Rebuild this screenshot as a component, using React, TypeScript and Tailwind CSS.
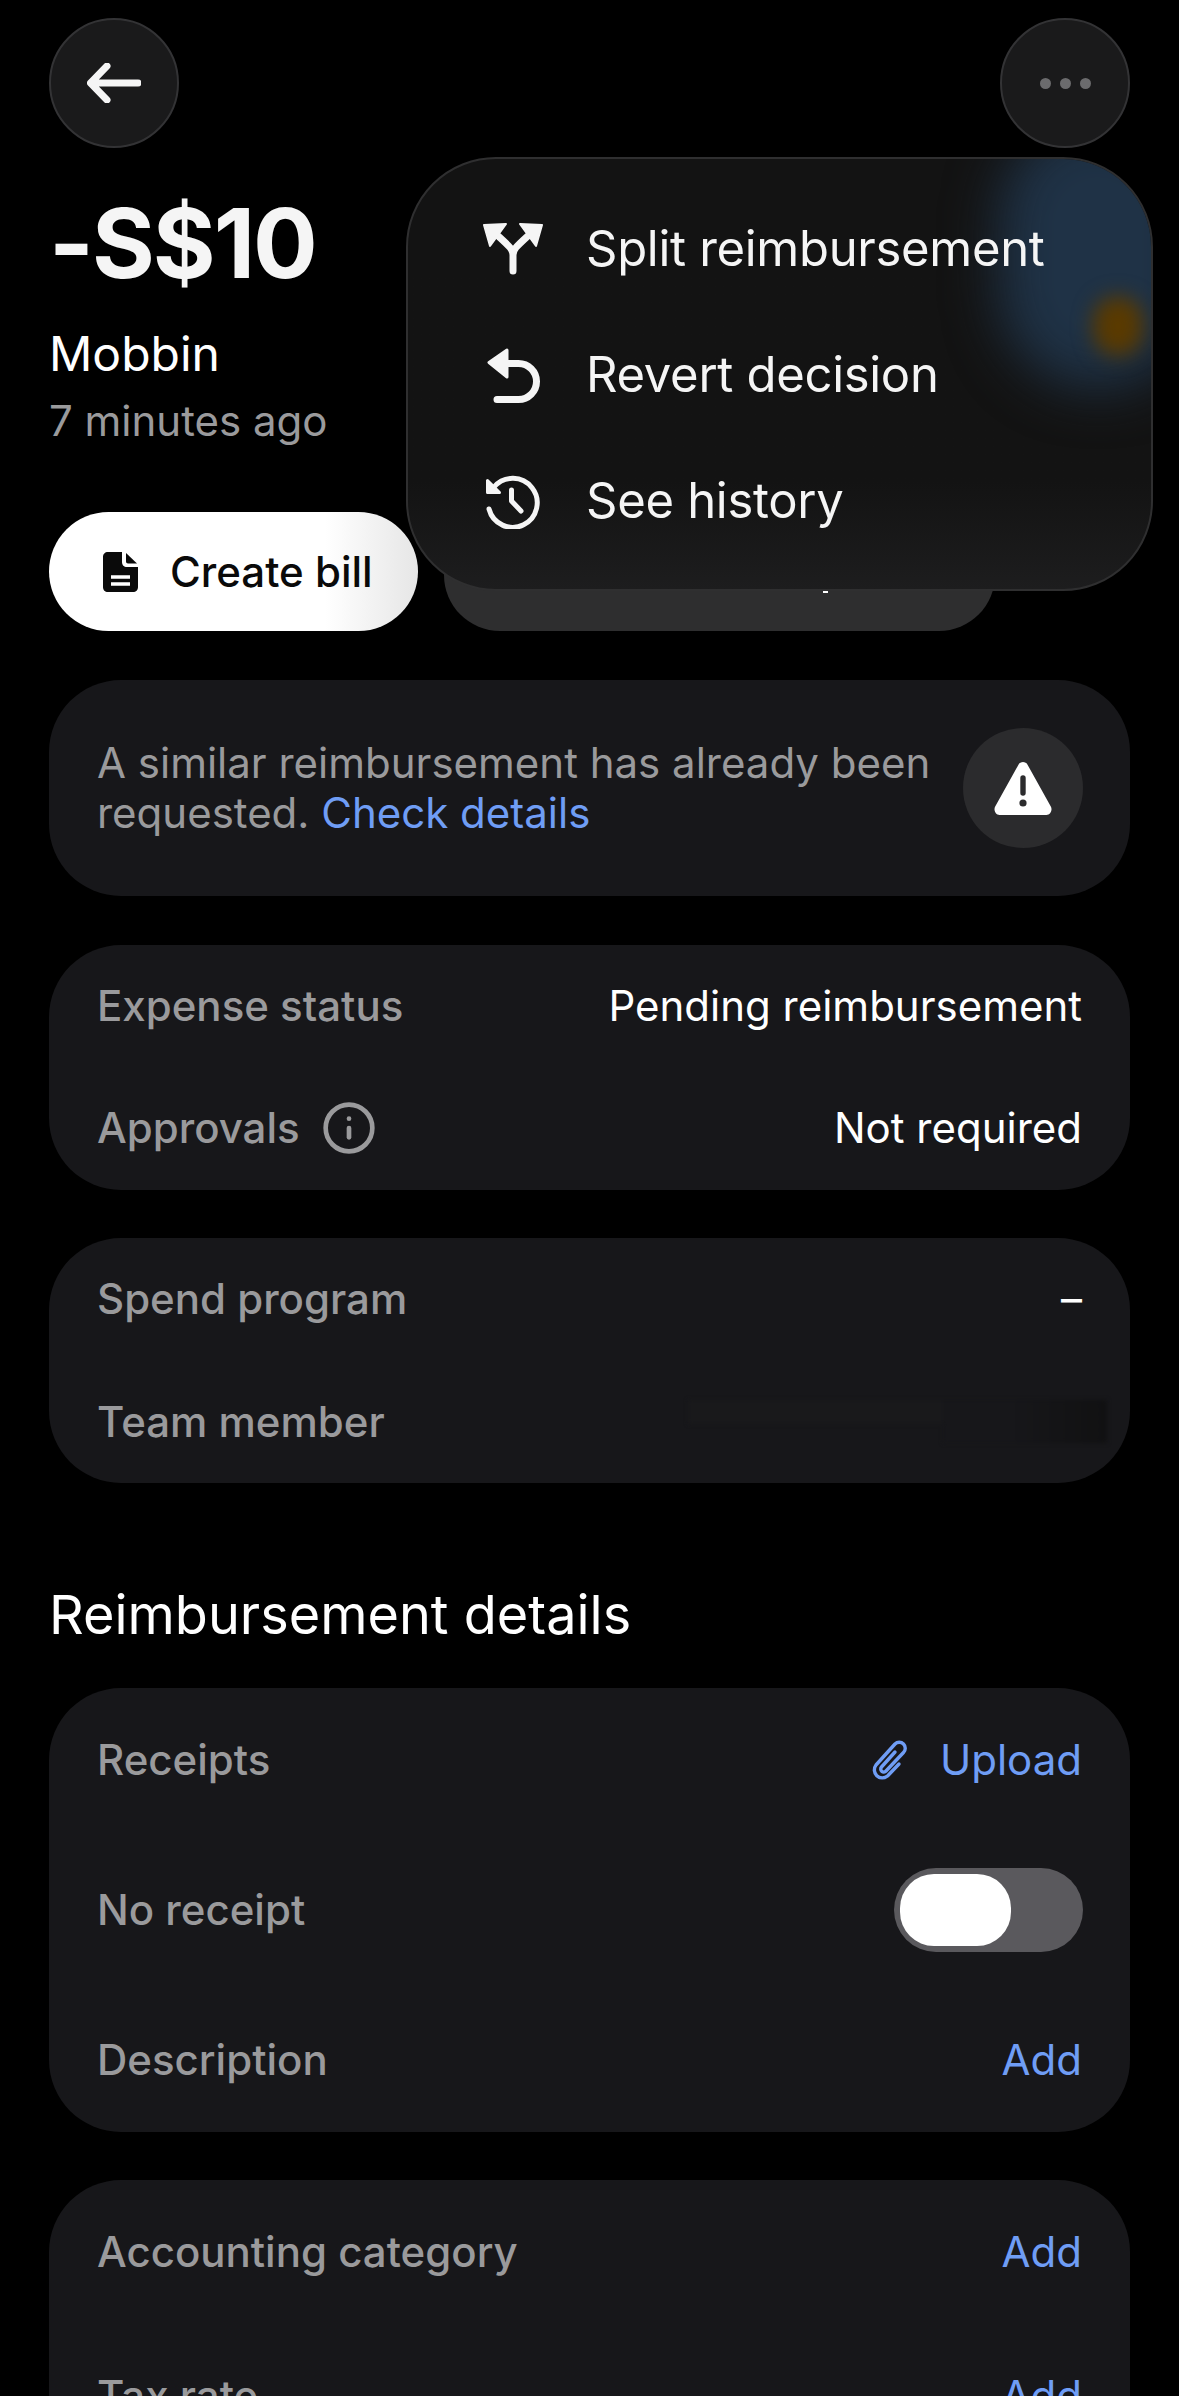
import { Info } from "lucide-react";
import type { ReactNode } from "react";

const font = { fontFamily: "Inter, 'Liberation Sans', sans-serif" };

function SplitIcon() {
  return (
    <svg width="60" height="52" viewBox="0 0 60 52" fill="none">
      <path d="M30 48V32C30 26 26 23 13 11M30 32C30 26 34 23 47 11" stroke="#f5f5f5" strokeWidth="7" strokeLinecap="round" />
      <path d="M1 2L23 1L7 23Z" fill="#f5f5f5" stroke="#f5f5f5" strokeWidth="2" strokeLinejoin="round" />
      <path d="M59 2L37 1L53 23Z" fill="#f5f5f5" stroke="#f5f5f5" strokeWidth="2" strokeLinejoin="round" />
    </svg>
  );
}

function RevertIcon() {
  return (
    <svg width="53" height="55" viewBox="0 0 53 55" fill="none">
      <path d="M18 15.5H31.5a18 18 0 0 1 0 36H10" stroke="#f5f5f5" strokeWidth="7" strokeLinecap="round" />
      <path d="M2 14.5L20 2V29Z" fill="#f5f5f5" stroke="#f5f5f5" strokeWidth="3" strokeLinejoin="round" />
    </svg>
  );
}

function HistoryIcon() {
  return (
    <svg width="54" height="55" viewBox="0 0 54 55" fill="none">
      <path d="M8 13A24.5 24.5 0 1 1 3 35" stroke="#f5f5f5" strokeWidth="5" strokeLinecap="round" />
      <path d="M1.5 6.5V18.5H13.5Z" fill="#f5f5f5" stroke="#f5f5f5" strokeWidth="3" strokeLinejoin="round" />
      <path d="M25.5 16V27L35 37" stroke="#f5f5f5" strokeWidth="5" strokeLinecap="round" strokeLinejoin="round" />
    </svg>
  );
}

function BackArrow() {
  return (
    <svg width="54" height="40" viewBox="0 0 54 40" fill="none">
      <path d="M51 20H4M20 3L3.5 20L20 37" stroke="#f5f5f5" strokeWidth="7" strokeLinecap="round" strokeLinejoin="round" />
    </svg>
  );
}

function BillIcon() {
  return (
    <svg width="35" height="40" viewBox="0 0 35 40">
      <path d="M5 0H19V10C19 13 21 15 24 15H35V35C35 38 33 40 30 40H5C2 40 0 38 0 35V5C0 2 2 0 5 0Z" fill="#0a0a0a" />
      <path d="M23 1L34 11.5H25C23.8 11.5 23 10.7 23 9.5Z" fill="#0a0a0a" />
      <path d="M8 25H27M8 32H27" stroke="#fff" strokeWidth="3.6" />
    </svg>
  );
}

function WarningIcon() {
  return (
    <svg width="58" height="54" viewBox="0 0 58 54">
      <path d="M24.6 3.5C26.6 0 31.4 0 33.4 3.5L56.8 45.5C58.8 49 56.4 54 52.4 54H5.6C1.6 54 -0.8 49 1.2 45.5Z" fill="#fff" />
      <path d="M29 17V32" stroke="#2b2b2d" strokeWidth="5.4" strokeLinecap="round" />
      <circle cx="29" cy="42" r="3.6" fill="#2b2b2d" />
    </svg>
  );
}

function ClipIcon() {
  return (
    <svg width="37" height="40" viewBox="0 0 37 40" fill="none">
      <path
        d="M23 12L9.5 27a3 3 0 0 0 4.5 4L31.5 12.5a6 6 0 0 0-8.5-8.5L4 25a8 8 0 0 0 11.5 11L27 24"
        stroke="#6f9df5"
        strokeWidth="3.4"
        strokeLinecap="round"
        strokeLinejoin="round"
      />
    </svg>
  );
}

function Row({ label, children, tall }: { label: ReactNode; children?: ReactNode; tall?: boolean }) {
  return (
    <div className={`flex items-center justify-between ${tall ? "h-[144px]" : "h-[122.5px]"}`}>
      <div className="flex items-center gap-[21px] font-medium text-[#9a9a9c]">{label}</div>
      {children}
    </div>
  );
}

const Card = ({ children, className = "" }: { children: ReactNode; className?: string }) => (
  <div className={`rounded-[72px] bg-[#17171a] px-[48px] ${className}`}>{children}</div>
);

const LinkText = ({ children }: { children: ReactNode }) => <span className="text-[#6f9df5]">{children}</span>;

export default function App() {
  return (
    <div style={font} className="relative h-[2396px] w-[1179px] overflow-hidden bg-black text-[42px] leading-[50px] text-white">
      <div className="flex justify-between px-[49px] pt-[18px]">
        <button className="flex h-[130px] w-[130px] items-center justify-center rounded-full border-2 border-[#333335] bg-[#1a1a1b]">
          <BackArrow />
        </button>
        <button className="flex h-[130px] w-[130px] items-center justify-center gap-[9px] rounded-full border-2 border-[#333335] bg-[#1a1a1b]">
          <span className="h-[11px] w-[11px] rounded-full bg-[#6b6b6d]" />
          <span className="h-[11px] w-[11px] rounded-full bg-[#6b6b6d]" />
          <span className="h-[11px] w-[11px] rounded-full bg-[#6b6b6d]" />
        </button>
      </div>

      <div className="px-[49px]">
        <h1 className="mt-[37px] text-[96px] font-bold leading-[116px] tracking-[-2px] text-[#f5f5f5]">-S$10</h1>
        <p className="mt-[25px] text-[48px] leading-[56px]">Mobbin</p>
        <p className="mt-[14px] text-[#9a9a9c]">7 minutes ago</p>

        <div className="mt-[66px] flex gap-[26px]">
          <button className="flex h-[119px] w-[369px] items-center gap-[32px] rounded-[60px] bg-linear-to-r from-white from-75% to-[#e6e6e6] pl-[54px] font-medium text-[#0a0a0a]">
            <BillIcon />
            Create bill
          </button>
          <div className="relative h-[119px] w-[551px] rounded-[56px] bg-[#2e2e2f]">
            <span className="absolute left-[379px] top-[78px] h-[3px] w-[5px] bg-white" />
          </div>
        </div>

        <div className="mt-[49px] flex flex-col gap-[48.5px]">
          <Card className="flex h-[216px] items-center justify-between pr-[47px]">
            <p className="w-[860px] text-[#9a9a9c]">
              A similar reimbursement has already been requested. <LinkText>Check details</LinkText>
            </p>
            <div className="flex h-[120px] w-[120px] shrink-0 items-center justify-center rounded-full bg-[#2b2b2d]">
              <WarningIcon />
            </div>
          </Card>

          <Card>
            <Row label="Expense status">Pending reimbursement</Row>
            <Row
              label={
                <>
                  Approvals
                  <Info size={56} strokeWidth={2} className="text-[#9a9a9c]" />
                </>
              }
            >
              Not required
            </Row>
          </Card>

          <Card>
            <Row label="Spend program">–</Row>
            <Row label="Team member">
              {/* redacted name, blurred in the source */}
              <div className="-mr-[25px] flex h-[43px] w-[419px] blur-[2px]">
                <div className="h-[24px] w-[255px] bg-[#19191b]" />
                <div className="h-full flex-1 bg-linear-to-r from-[#17171a] from-40% to-[#111112]" />
              </div>
            </Row>
          </Card>
        </div>

        <h2 className="mt-[102px] text-[54px] leading-[60px]">Reimbursement details</h2>

        <div className="mt-[43px] flex flex-col gap-[48px]">
          <Card className="flex flex-col gap-[6px]">
            <Row tall label="Receipts">
              <div className="flex items-center gap-[31px]">
                <ClipIcon />
                <LinkText>Upload</LinkText>
              </div>
            </Row>
            <Row tall label="No receipt">
              <div className="-mr-[1px] flex h-[84px] w-[189px] items-center rounded-[42px] bg-[#5a595d] pl-[6px]">
                <div className="h-[72px] w-[111px] rounded-[34px] bg-white" />
              </div>
            </Row>
            <Row tall label="Description">
              <LinkText>Add</LinkText>
            </Row>
          </Card>

          <Card>
            <Row tall label="Accounting category">
              <LinkText>Add</LinkText>
            </Row>
            <Row tall label="Tax rate">
              <LinkText>Add</LinkText>
            </Row>
          </Card>
        </div>
      </div>

      {/* popover floats over the action buttons */}
      <div className="absolute left-[406px] top-[157px] h-[434px] w-[747px] overflow-hidden rounded-[90px] border-2 border-[#2f2f30] bg-linear-to-b from-[#131313] from-75% to-[#1d1d1e]">
        <div className="absolute left-[590px] top-[-40px] h-[270px] w-[200px] rounded-full bg-[#1f3246] blur-[26px]" />
        <div className="absolute left-[685px] top-[137px] h-[60px] w-[50px] rounded-full bg-[#5a3a00] blur-[10px]" />
        <div className="relative flex flex-col pl-[75px] pt-[27px] text-[49px] leading-[60px] tracking-[-0.3px] text-[#f5f5f5]">
          <div className="flex h-[126px] items-center gap-[43px]">
            <span className="flex w-[60px] justify-center"><SplitIcon /></span>
            Split reimbursement
          </div>
          <div className="flex h-[126px] items-center gap-[43px]">
            <span className="flex w-[60px] justify-center"><RevertIcon /></span>
            Revert decision
          </div>
          <div className="flex h-[126px] items-center gap-[43px]">
            <span className="flex w-[60px] justify-center"><HistoryIcon /></span>
            See history
          </div>
        </div>
      </div>
    </div>
  );
}
